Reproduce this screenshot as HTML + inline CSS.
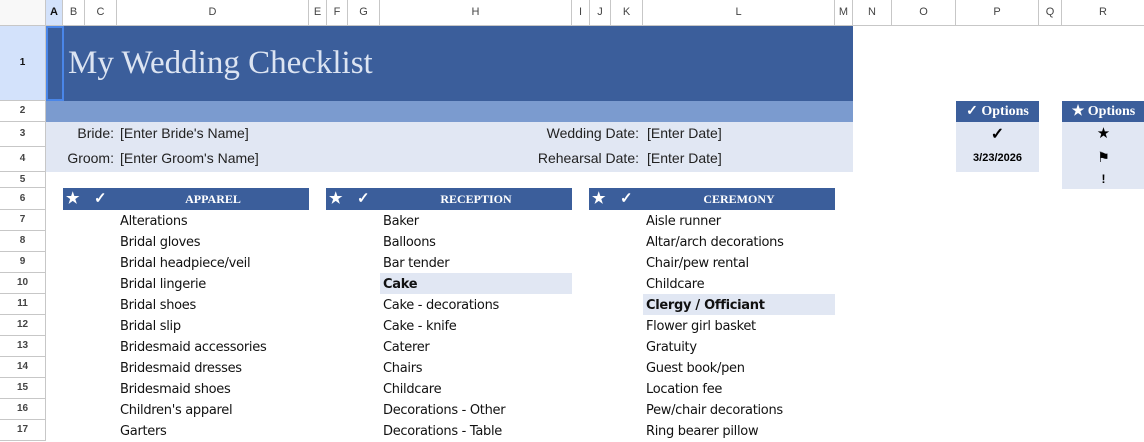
<!DOCTYPE html><html><head><style>
body{margin:0;width:1144px;height:439px;overflow:hidden;background:#fff;position:relative;font-family:"Liberation Sans",sans-serif}
div{position:absolute;box-sizing:border-box}
.ch{top:0;height:26px;border-right:1px solid #c7c7c7;border-bottom:1px solid #c7c7c7;background:#fff;font-size:11px;color:#444;text-align:center;line-height:25px}
.rh{left:0;width:46px;border-right:1px solid #c7c7c7;border-bottom:1px solid #c7c7c7;font-size:10px;color:#444;text-align:center;font-weight:bold}
.b{background:#3b5e9b}.l{background:#e1e7f3}
.t{font-size:13px;color:#111;white-space:nowrap;font-family:"DejaVu Sans",sans-serif;letter-spacing:-0.3px}
.hd{color:#fff;font-family:"Liberation Serif",serif;font-weight:bold;font-size:12px;text-align:center;line-height:22px}
.lab{font-size:14px;color:#222;white-space:nowrap}
</style></head><body>
<div class="ch" style="left:0;width:46px;background:#f8f8f8"></div>
<div class="ch" style="left:46px;width:17px;background:#d3e2fb;font-weight:bold;color:#111">A</div>
<div class="ch" style="left:63px;width:22px">B</div>
<div class="ch" style="left:85px;width:32px">C</div>
<div class="ch" style="left:117px;width:192px">D</div>
<div class="ch" style="left:309px;width:18px">E</div>
<div class="ch" style="left:327px;width:21px">F</div>
<div class="ch" style="left:348px;width:32px">G</div>
<div class="ch" style="left:380px;width:192px">H</div>
<div class="ch" style="left:572px;width:18px">I</div>
<div class="ch" style="left:590px;width:21px">J</div>
<div class="ch" style="left:611px;width:32px">K</div>
<div class="ch" style="left:643px;width:192px">L</div>
<div class="ch" style="left:835px;width:18px">M</div>
<div class="ch" style="left:853px;width:39px">N</div>
<div class="ch" style="left:892px;width:64px">O</div>
<div class="ch" style="left:956px;width:83px">P</div>
<div class="ch" style="left:1039px;width:23px">Q</div>
<div class="ch" style="left:1062px;width:83px">R</div>

<div class="rh" style="top:26px;height:75px;line-height:74px;background:#d3e2fb;color:#111">1</div>
<div class="rh" style="top:101px;height:21px;line-height:20px">2</div>
<div class="rh" style="top:122px;height:25px;line-height:24px">3</div>
<div class="rh" style="top:147px;height:25px;line-height:24px">4</div>
<div class="rh" style="top:172px;height:16px;line-height:15px">5</div>
<div class="rh" style="top:188px;height:22px;line-height:21px">6</div>
<div class="rh" style="top:210px;height:21px;line-height:20px">7</div>
<div class="rh" style="top:231px;height:21px;line-height:20px">8</div>
<div class="rh" style="top:252px;height:21px;line-height:20px">9</div>
<div class="rh" style="top:273px;height:21px;line-height:20px">10</div>
<div class="rh" style="top:294px;height:21px;line-height:20px">11</div>
<div class="rh" style="top:315px;height:21px;line-height:20px">12</div>
<div class="rh" style="top:336px;height:21px;line-height:20px">13</div>
<div class="rh" style="top:357px;height:21px;line-height:20px">14</div>
<div class="rh" style="top:378px;height:21px;line-height:20px">15</div>
<div class="rh" style="top:399px;height:21px;line-height:20px">16</div>
<div class="rh" style="top:420px;height:21px;line-height:20px">17</div>

<div class="b" style="left:46px;top:26px;width:807px;height:75px"></div>
<div style="left:46px;top:26px;width:18px;height:75px;border:2px solid #4a86e8"></div>
<div style="left:68px;top:45px;font-family:'Liberation Serif',serif;font-size:33px;color:#dce4f2;white-space:nowrap">My Wedding Checklist</div>
<div style="left:46px;top:101px;width:807px;height:21px;background:#7b9bcf"></div>
<div class="l" style="left:46px;top:122px;width:807px;height:50px"></div>
<div class="lab" style="left:46px;top:125px;width:68px;text-align:right">Bride:</div>
<div class="lab" style="left:120px;top:125px">[Enter Bride's Name]</div>
<div class="lab" style="left:46px;top:150px;width:68px;text-align:right">Groom:</div>
<div class="lab" style="left:120px;top:150px">[Enter Groom's Name]</div>
<div class="lab" style="left:500px;top:125px;width:139px;text-align:right">Wedding Date:</div>
<div class="lab" style="left:647px;top:125px">[Enter Date]</div>
<div class="lab" style="left:500px;top:150px;width:139px;text-align:right">Rehearsal Date:</div>
<div class="lab" style="left:647px;top:150px">[Enter Date]</div>

<div class="b hd" style="left:956px;top:101px;width:83px;height:21px;line-height:21px;font-size:14px">✓ Options</div>
<div class="l" style="left:956px;top:122px;width:83px;height:50px"></div>
<div style="left:956px;top:124px;width:83px;text-align:center;font-size:16px;font-weight:bold">✓</div>
<div style="left:956px;top:152px;width:83px;text-align:center;font-size:11px;font-weight:bold">3/23/2026</div>
<div class="b hd" style="left:1062px;top:101px;width:83px;height:21px;line-height:21px;font-size:14px">★ Options</div>
<div class="l" style="left:1062px;top:122px;width:83px;height:67px"></div>
<div style="left:1062px;top:124px;width:83px;text-align:center;font-size:15px">★</div>
<div style="left:1062px;top:149px;width:83px;text-align:center;font-size:14px">⚑</div>
<div style="left:1062px;top:172px;width:83px;text-align:center;font-size:12px;font-weight:bold">!</div>

<div class="b" style="left:63px;top:188px;width:246px;height:22px"></div>
<div class="b" style="left:326px;top:188px;width:246px;height:22px"></div>
<div class="b" style="left:589px;top:188px;width:246px;height:22px"></div>
<div class="hd" style="left:66px;top:188px;font-size:15px">★</div><div class="hd" style="left:94px;top:188px;font-size:15px">✓</div>
<div class="hd" style="left:329px;top:188px;font-size:15px">★</div><div class="hd" style="left:357px;top:188px;font-size:15px">✓</div>
<div class="hd" style="left:592px;top:188px;font-size:15px">★</div><div class="hd" style="left:620px;top:188px;font-size:15px">✓</div>
<div class="hd" style="left:117px;top:188px;width:192px">APPAREL</div>
<div class="hd" style="left:380px;top:188px;width:192px">RECEPTION</div>
<div class="hd" style="left:643px;top:188px;width:192px">CEREMONY</div>

<div class="l" style="left:380px;top:273px;width:192px;height:21px"></div>
<div class="l" style="left:643px;top:294px;width:192px;height:21px"></div>

<div class="t" style="left:120px;top:211px;line-height:21px">Alterations<br>Bridal gloves<br>Bridal headpiece/veil<br>Bridal lingerie<br>Bridal shoes<br>Bridal slip<br>Bridesmaid accessories<br>Bridesmaid dresses<br>Bridesmaid shoes<br>Children's apparel<br>Garters</div>
<div class="t" style="left:383px;top:211px;line-height:21px">Baker<br>Balloons<br>Bar tender<br><b>Cake</b><br>Cake - decorations<br>Cake - knife<br>Caterer<br>Chairs<br>Childcare<br>Decorations - Other<br>Decorations - Table</div>
<div class="t" style="left:646px;top:211px;line-height:21px">Aisle runner<br>Altar/arch decorations<br>Chair/pew rental<br>Childcare<br><b>Clergy / Officiant</b><br>Flower girl basket<br>Gratuity<br>Guest book/pen<br>Location fee<br>Pew/chair decorations<br>Ring bearer pillow</div>
</body></html>
